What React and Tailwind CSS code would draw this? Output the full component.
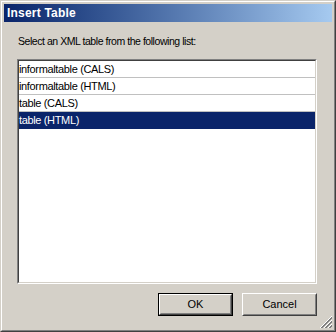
import React from "react";

const items = [
  "informaltable (CALS)",
  "informaltable (HTML)",
  "table (CALS)",
  "table (HTML)",
];

const Button = ({ label, isDefault = false }) => (
  <div
    className={`w-[75px] h-[23px] ${
      isDefault ? "border border-black" : ""
    }`}
  >
    <div className="w-full h-full border border-t-white border-l-white border-b-[#404040] border-r-[#404040]">
      <div className="w-full h-full flex items-center justify-center border border-t-[#d4d0c8] border-l-[#d4d0c8] border-b-[#808080] border-r-[#808080] text-[11px] text-black">
        {label}
      </div>
    </div>
  </div>
);

export default function App() {
  return (
    <div
      className="w-[336px] h-[332px] bg-[#d4d0c8] border border-t-[#d4d0c8] border-l-[#d4d0c8] border-b-[#404040] border-r-[#404040]"
      style={{ fontFamily: '"Liberation Sans", Arial, sans-serif' }}
    >
      <div className="w-full h-full border border-t-white border-l-white border-b-[#808080] border-r-[#808080] p-[2px] flex flex-col">
        {/* title bar */}
        <div className="h-[18px] bg-gradient-to-r from-[#0a246a] to-[#a6caf0] flex items-center pl-[3px]">
          <span className="text-white font-bold text-[12px] leading-none tracking-[0.2px]">
            Insert Table
          </span>
        </div>

        <div className="flex-1 flex flex-col pl-[13px] pr-[15px] relative">
          <p className="mt-[13px] text-[10.5px] leading-[13px] text-black pl-px tracking-[-0.45px]">
            Select an XML table from the following list:
          </p>

          {/* list box */}
          <div className="mt-[11px] h-[225px] border border-t-[#808080] border-l-[#808080] border-b-white border-r-white">
            <div className="w-full h-full bg-white border border-t-[#404040] border-l-[#404040] border-b-[#d4d0c8] border-r-[#d4d0c8]">
              {items.map((item, i) => {
                const selected = i === items.length - 1;
                return (
                  <div
                    key={item}
                    className={`h-[17px] flex items-center pl-0 text-[11px] tracking-[-0.35px] border-b ${
                      selected
                        ? "bg-[#0a246a] text-white border-[#0a246a]"
                        : "text-black border-[#c0c0c0]"
                    }`}
                  >
                    {item}
                  </div>
                );
              })}
            </div>
          </div>

          {/* buttons */}
          <div className="mt-[9px] flex justify-end gap-[9px]">
            <Button label="OK" isDefault />
            <Button label="Cancel" />
          </div>
        </div>

        {/* resize grip */}
        <div className="relative">
          <svg
            className="absolute right-0 bottom-0"
            width="12"
            height="12"
            viewBox="0 0 12 12"
          >
            {[0, 4, 8].map((o) => (
              <g key={o}>
                <line x1={12} y1={o} x2={o} y2={12} stroke="#ffffff" strokeWidth="1" />
                <line x1={12} y1={o + 1} x2={o + 1} y2={12} stroke="#808080" strokeWidth="1" />
                <line x1={12} y1={o + 2} x2={o + 2} y2={12} stroke="#808080" strokeWidth="1" />
              </g>
            ))}
          </svg>
        </div>
      </div>
    </div>
  );
}
